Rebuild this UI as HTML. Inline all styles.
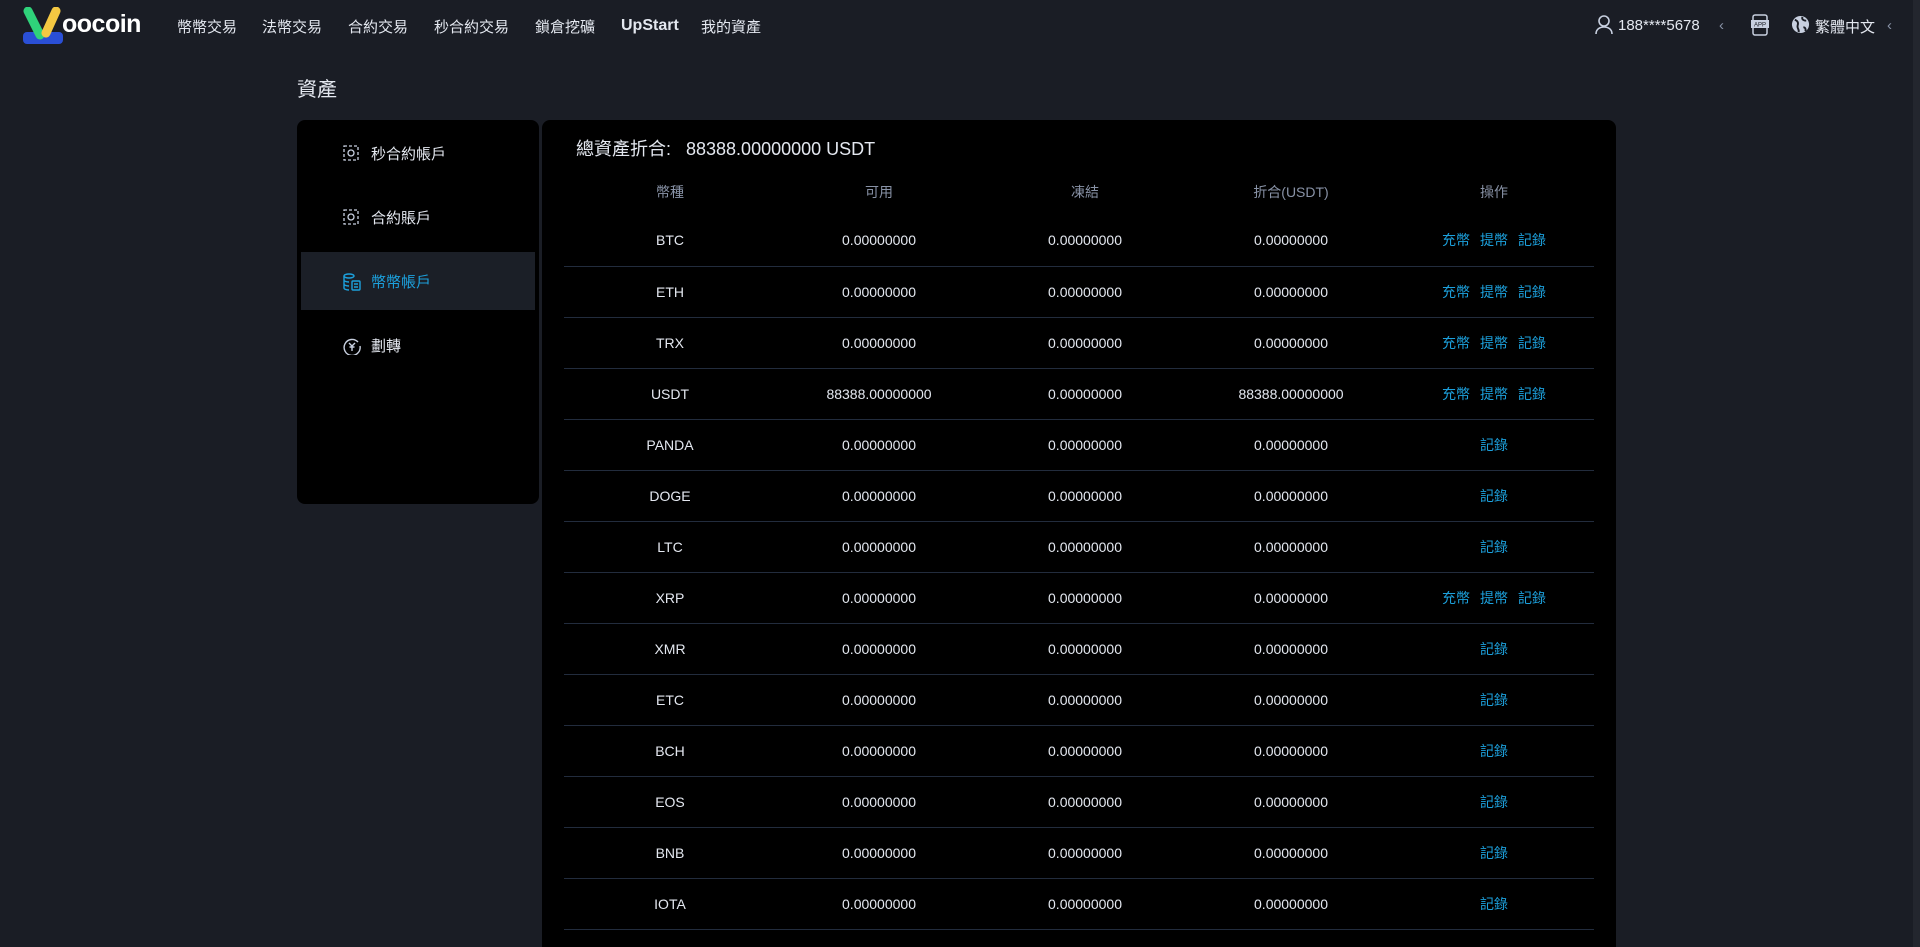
<!DOCTYPE html><html><head><meta charset="utf-8"><style>
*{margin:0;padding:0;box-sizing:border-box}
html{width:1920px;height:947px;overflow:hidden}
body{width:1920px;height:947px;overflow:hidden;background:#1a1d25;font-family:"Liberation Sans","Noto Sans CJK TC",sans-serif;color:#d6dbe6;position:relative}
.nav{position:absolute;left:0;top:0;width:1920px;height:52px;background:#1a1d25}
.nav .it{position:absolute;top:16px;font-size:15px;color:#e4e8f0}
.side{position:absolute;left:297px;top:120px;width:242px;height:384px;background:#000;border-radius:8px}
.si{position:absolute;left:4px;width:234px;height:58px;font-size:15px;color:#e4e8f0}
.si span{position:absolute;left:70px;top:19px}
.si svg{position:absolute;left:42px;top:21px}
.main{position:absolute;left:542px;top:120px;width:1074px;height:827px;background:#000;border-radius:8px 8px 0 0;overflow:hidden}
.tt{position:absolute;left:34px;top:15px;font-size:18px;color:#e4e8f0}
table{position:absolute;left:22px;top:49px;width:1030px;border-collapse:collapse;font-size:14px}
th{height:46px;font-weight:normal;color:#8892a6;font-size:14px}
td{height:51px;text-align:center;border-bottom:1px solid #222c3d;color:#e4e8f0}
td.op{color:#1ca0dc}
td.op b{font-weight:normal;margin:0 5px}
.c1{width:212px}.c2{width:206px}.c3{width:206px}.c4{width:206px}
</style></head><body>
<div class="nav">
<svg style="position:absolute;left:22px;top:7px" width="42" height="38" viewBox="0 0 42 38"><rect x="1" y="25" width="40" height="12" rx="4" fill="#2a4fd6"/><path d="M6 4 L18 28" stroke="#2fd27a" stroke-width="9" stroke-linecap="round"/><path d="M34 4 L24 26" stroke="#f4c842" stroke-width="9" stroke-linecap="round"/></svg>
<div style="position:absolute;left:62px;top:10px;font-size:25px;font-weight:bold;color:#fff;letter-spacing:-0.5px">oocoin</div>
<div class="it" style="left:177px">幣幣交易</div>
<div class="it" style="left:262px">法幣交易</div>
<div class="it" style="left:348px">合約交易</div>
<div class="it" style="left:434px">秒合約交易</div>
<div class="it" style="left:535px">鎖倉挖礦</div>
<div class="it" style="left:621px;font-weight:bold;font-size:16px;top:17px">UpStart</div>
<div class="it" style="left:701px">我的資產</div>
<svg style="position:absolute;left:1595px;top:15px" width="18" height="20" viewBox="0 0 18 20" fill="none" stroke="#c8d0e0" stroke-width="1.6"><circle cx="9" cy="6" r="5"/><path d="M1 19c0-5 4-7 8-7s8 2 8 7"/></svg>
<div class="it" style="left:1618px;top:17px">188****5678</div>
<div class="it" style="left:1719px;color:#8892a6;top:17px">‹</div>
<svg style="position:absolute;left:1751px;top:14px" width="18" height="22" viewBox="0 0 18 22"><rect x="2" y="1" width="14" height="20" rx="2" fill="none" stroke="#c8d0e0" stroke-width="1.5"/><rect x="0" y="6" width="18" height="8" fill="#c8d0e0"/><text x="9" y="12.5" font-size="6" text-anchor="middle" fill="#1a1d25" font-family="Liberation Sans">APP</text></svg>
<svg style="position:absolute;left:1791px;top:15px" width="19" height="19" viewBox="0 0 20 20"><circle cx="10" cy="10" r="9" fill="#c8d0e0"/><path d="M4 5c3 1 4 3 3 6s2 4 1 7M12 2c-1 3 2 4 4 4M13 13c2 0 3 2 2 4" stroke="#1a1d25" stroke-width="2" fill="none"/></svg>
<div class="it" style="left:1815px">繁體中文</div>
<div class="it" style="left:1887px;color:#8892a6;top:17px">‹</div>
</div>
<div style="position:absolute;left:1913px;top:0;width:7px;height:947px;background:#23262e"></div>
<div style="position:absolute;left:297px;top:73px;font-size:20px;color:#e4e8f0">資產</div>
<div class="side">
<div class="si" style="top:4px"><svg width="16" height="16" viewBox="0 0 16 16" fill="none" stroke="#c8d0e0" stroke-width="1.3"><rect x="1" y="1" width="14" height="14" stroke-dasharray="3 2"/><circle cx="8" cy="8" r="3"/></svg><span>秒合約帳戶</span></div>
<div class="si" style="top:68px"><svg width="16" height="16" viewBox="0 0 16 16" fill="none" stroke="#c8d0e0" stroke-width="1.3"><rect x="1" y="1" width="14" height="14" stroke-dasharray="3 2"/><circle cx="8" cy="8" r="3"/></svg><span>合約賬戶</span></div>
<div class="si" style="top:132px;background:#1b1f27;color:#1ca0dc"><svg width="18" height="18" viewBox="0 0 18 18" fill="none" stroke="#1ca0dc" stroke-width="1.4"><ellipse cx="6" cy="3" rx="5" ry="2"/><path d="M1 3v12c0 1 2 2 5 2M1 7c0 1 2 2 5 2M1 11c0 1 2 2 5 2"/><rect x="9" y="8" width="8" height="9" rx="1"/><path d="M11 11h4M11 14h4"/></svg><span>幣幣帳戶</span></div>
<div class="si" style="top:196px"><svg width="18" height="18" viewBox="0 0 18 18" fill="none" stroke="#c8d0e0" stroke-width="1.4"><path d="M15 5A8 8 0 1 0 17 9"/><path d="M6 6l3 3 3-3M9 9v5M6.5 10h5"/></svg><span>劃轉</span></div>
</div>
<div class="main">
<div class="tt">總資產折合:&nbsp;&nbsp; 88388.00000000 USDT</div>
<table>
<tr><th class="c1">幣種</th><th class="c2">可用</th><th class="c3">凍結</th><th class="c4">折合(USDT)</th><th>操作</th></tr>
<tr><td>BTC</td><td>0.00000000</td><td>0.00000000</td><td>0.00000000</td><td class="op"><b>充幣</b><b>提幣</b><b>記錄</b></td></tr>
<tr><td>ETH</td><td>0.00000000</td><td>0.00000000</td><td>0.00000000</td><td class="op"><b>充幣</b><b>提幣</b><b>記錄</b></td></tr>
<tr><td>TRX</td><td>0.00000000</td><td>0.00000000</td><td>0.00000000</td><td class="op"><b>充幣</b><b>提幣</b><b>記錄</b></td></tr>
<tr><td>USDT</td><td>88388.00000000</td><td>0.00000000</td><td>88388.00000000</td><td class="op"><b>充幣</b><b>提幣</b><b>記錄</b></td></tr>
<tr><td>PANDA</td><td>0.00000000</td><td>0.00000000</td><td>0.00000000</td><td class="op"><b>記錄</b></td></tr>
<tr><td>DOGE</td><td>0.00000000</td><td>0.00000000</td><td>0.00000000</td><td class="op"><b>記錄</b></td></tr>
<tr><td>LTC</td><td>0.00000000</td><td>0.00000000</td><td>0.00000000</td><td class="op"><b>記錄</b></td></tr>
<tr><td>XRP</td><td>0.00000000</td><td>0.00000000</td><td>0.00000000</td><td class="op"><b>充幣</b><b>提幣</b><b>記錄</b></td></tr>
<tr><td>XMR</td><td>0.00000000</td><td>0.00000000</td><td>0.00000000</td><td class="op"><b>記錄</b></td></tr>
<tr><td>ETC</td><td>0.00000000</td><td>0.00000000</td><td>0.00000000</td><td class="op"><b>記錄</b></td></tr>
<tr><td>BCH</td><td>0.00000000</td><td>0.00000000</td><td>0.00000000</td><td class="op"><b>記錄</b></td></tr>
<tr><td>EOS</td><td>0.00000000</td><td>0.00000000</td><td>0.00000000</td><td class="op"><b>記錄</b></td></tr>
<tr><td>BNB</td><td>0.00000000</td><td>0.00000000</td><td>0.00000000</td><td class="op"><b>記錄</b></td></tr>
<tr><td>IOTA</td><td>0.00000000</td><td>0.00000000</td><td>0.00000000</td><td class="op"><b>記錄</b></td></tr>
</table>
</div>
</body></html>
